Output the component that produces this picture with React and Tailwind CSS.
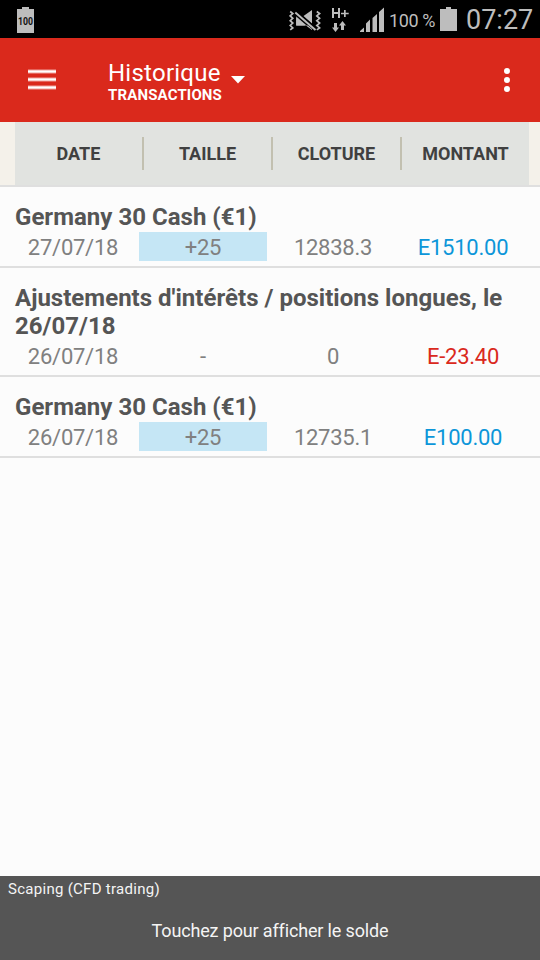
import React from 'react';

const headings = ['DATE', 'TAILLE', 'CLOTURE', 'MONTANT'];

const transactions = [
  { title: ['Germany 30 Cash (€1)'], date: '27/07/18', size: '+25', close: '12838.3', amount: 'E1510.00', filled: true },
  { title: ["Ajustements d'intérêts / positions longues, le", '26/07/18'], date: '26/07/18', size: '-', close: '0', amount: 'E-23.40', loss: true },
  { title: ['Germany 30 Cash (€1)'], date: '26/07/18', size: '+25', close: '12735.1', amount: 'E100.00', filled: true },
];

function StatusBar() {
  return (
    <div className="flex h-[38px] items-center bg-black text-[#bdbdbd]">
      <svg className="ml-[17px] h-[38px] w-[17px] shrink-0" viewBox="0 0 17 38">
        <path d="M5 7h7v2h5v24H0V9h5z" fill="#bdbdbd" />
        <text x="8.5" y="25" textAnchor="middle" fontFamily="Roboto, sans-serif" fontSize="10" fontWeight="700" fill="#111" textLength="15" lengthAdjust="spacingAndGlyphs">100</text>
      </svg>
      <div className="flex-1" />
      <svg className="h-[38px] w-[96px] shrink-0" viewBox="289 0 96 38">
        <path d="M296.200 15l12 10.500h-12zM303.500 16l8.500-6v13.500z" fill="#bdbdbd" />
        <path d="M294.500 12l21.500 18.500" stroke="#000" strokeWidth="4.500" />
        <path d="M296.200 17.500l9 8h-9zM306 25.500h2l4 3.500v1z" fill="#bdbdbd" />
        <path d="M295.300 12.500l20.200 17.500" stroke="#bdbdbd" strokeWidth="2" />
        <g fill="none" stroke="#bdbdbd" strokeWidth="1.700">
          <path d="M290.200 11.500l2.600 2-2.600 2.400 2.600 2.400-2.600 2.400 2.600 2.400-2.600 2.400 2.600 2.400-2.600 2" />
          <path d="M316.800 11.500l2.800 2-2.800 2.400 2.800 2.400-2.800 2.400 2.800 2.400-2.800 2.400 2.800 2.400-2.800 2" />
        </g>
        <path d="M332 8h2v4h4V8h2v10h-2v-4h-4v4h-2zM344 10h1.700v2.700h3v1.600h-3v2.700H344v-2.700h-3v-1.600h3z" fill="#bdbdbd" />
        <path d="M334 23h3v4.500h2l-3.500 4.500-3.500-4.500h2zM341 30h3v-4.500h2l-3.500-4.500-3.500 4.500h2z" fill="#bdbdbd" />
        <path d="M360 32v-1l4-3.500V32zM366 32v-8.500l4-4V32zM372.500 32V18l4.500-4v18zM379 32V12l5-4.500V32z" fill="#bdbdbd" />
      </svg>
      <span className="ml-[4px] w-[47px] whitespace-nowrap pt-[3px] text-[18px] leading-[20px] tracking-[-0.4px]">100 %</span>
      <svg className="ml-[4px] h-[38px] w-[17px] shrink-0" viewBox="0 0 17 38">
        <path d="M6 7h5v2h6v22H0V9h6z" fill="#bdbdbd" />
      </svg>
      <span className="ml-[9px] w-[74px] whitespace-nowrap pt-[2px] text-[27px] leading-[36px]">07:27</span>
    </div>
  );
}

function ActionBar() {
  return (
    <header className="flex h-[84px] items-center bg-[#da291c] text-white">
      <svg className="ml-[28px] h-[22px] w-[28px] shrink-0" viewBox="0 0 28 22">
        <path d="M0 .5h28v4H0zM0 8.500h28v4H0zM0 16.500h28v4H0z" fill="#f0a29c" />
        <path d="M0 1.500h28v2H0zM0 9.500h28v2H0zM0 17.500h28v2H0z" fill="#fff" />
      </svg>
      <div className="ml-[52px] flex flex-1 items-center">
        <div className="pt-[2px]">
          <div className="text-[24px] font-normal leading-[28px] tracking-[0.25px]">Historique</div>
          <div className="text-[15px] font-bold leading-[16px] tracking-[0.15px]">TRANSACTIONS</div>
        </div>
        <svg className="ml-[9px] h-[8px] w-[14px]" viewBox="0 0 14 8">
          <path d="M0 0h14L7 7.500z" fill="#fff" />
        </svg>
      </div>
      <svg className="mr-[30px] h-[26px] w-[6px]" viewBox="0 0 6 26">
        <circle cx="3" cy="4" r="3" fill="#fff" />
        <circle cx="3" cy="13" r="3" fill="#fff" />
        <circle cx="3" cy="22" r="3" fill="#fff" />
      </svg>
    </header>
  );
}

function ColumnHeadings() {
  return (
    <div className="h-[65px] border-b-2 border-[#dfdfdf] bg-[#f4f1ea] pl-[15px] pr-[11px]">
      <div className="flex h-[63px] items-center bg-[#e1e3e0]">
        {headings.map((heading, i) => (
          <React.Fragment key={heading}>
            {i > 0 && <span className="h-[33px] w-[2px] bg-[#c2c0b0]" />}
            <span className="flex-1 basis-0 text-center text-[18px] font-bold leading-[24px] text-[#404040]">{heading}</span>
          </React.Fragment>
        ))}
      </div>
    </div>
  );
}

function Transaction({ item }) {
  return (
    <article className="border-b-2 border-[#dfdfdf] pb-[5px] pt-[16px]">
      <h2 className="pb-px pl-[15px] text-[24px] font-bold leading-[28px] tracking-[0.02px] text-[#555]">
        {item.title.map((line) => (
          <span key={line} className="block whitespace-nowrap">{line}</span>
        ))}
      </h2>
      <div className="ml-[9px] grid w-[518px] grid-cols-4 gap-[2px] text-center text-[22px] leading-[31px] tracking-[-0.25px] text-[#808080]">
        <span className="h-[29px]">{item.date}</span>
        <span className={item.filled ? 'h-[29px] bg-[#c5e6f5]' : 'h-[29px]'}>{item.size}</span>
        <span className="h-[29px]">{item.close}</span>
        <span className={item.loss ? 'h-[29px] text-[#da291c]' : 'h-[29px] text-[#0c96d9]'}>{item.amount}</span>
      </div>
    </article>
  );
}

export default function App() {
  return (
    <div className="flex h-[960px] w-[540px] flex-col overflow-hidden bg-[#fcfcfc] font-['Roboto',sans-serif]">
      <StatusBar />
      <ActionBar />
      <ColumnHeadings />
      <main className="flex-1">
        {transactions.map((item, i) => (
          <Transaction key={i} item={item} />
        ))}
      </main>
      <footer className="h-[84px] bg-[#555] text-[#f4f4f4]">
        <div className="pl-[8px] pt-[3px] text-[15px] leading-[20px] tracking-[0.28px]">Scaping (CFD trading)</div>
        <div className="pt-[20px] text-center text-[18px] leading-[24px] tracking-[-0.15px]">Touchez pour afficher le solde</div>
      </footer>
    </div>
  );
}
